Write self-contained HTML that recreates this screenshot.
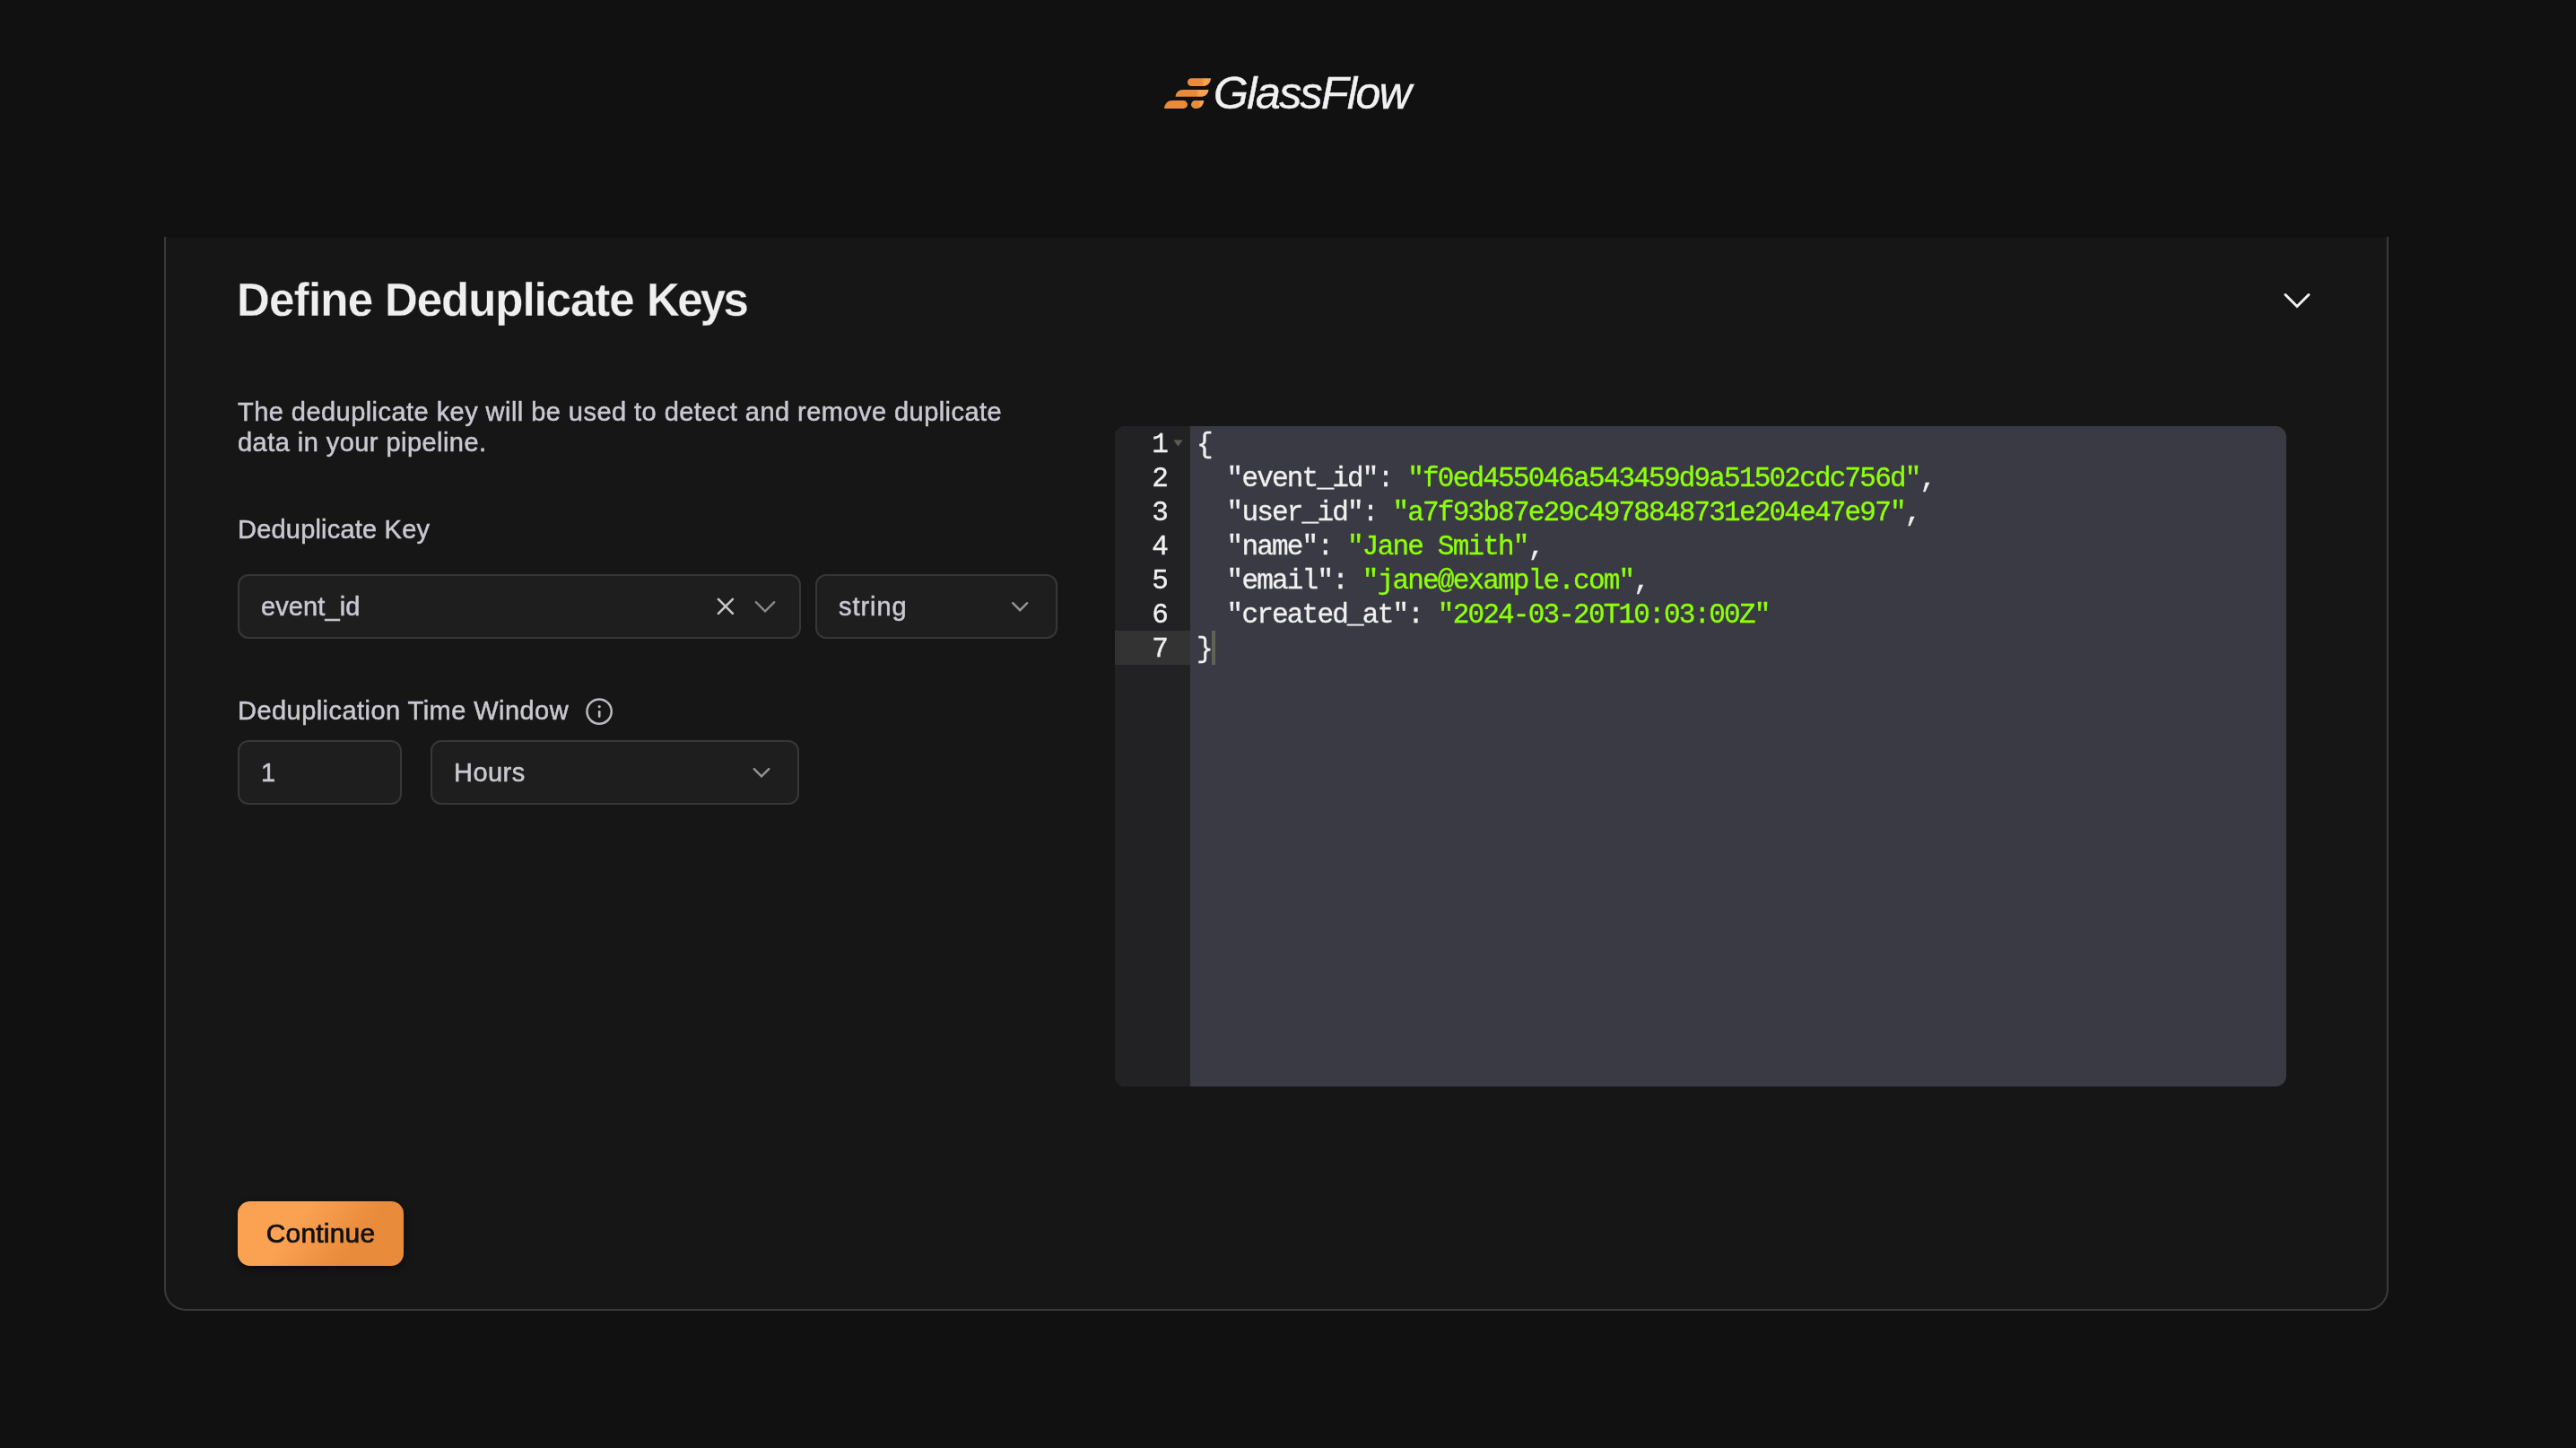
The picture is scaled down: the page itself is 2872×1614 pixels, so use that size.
<!DOCTYPE html>
<html lang="en">
<head>
<meta charset="utf-8">
<title>GlassFlow - Define Deduplicate Keys</title>
<style>
  * { box-sizing: border-box; margin: 0; padding: 0; }
  html, body {
    width: 2872px; height: 1614px; overflow: hidden;
    background: #111111;
    font-family: "Liberation Sans", sans-serif;
    color: #c9c9d1;
  }
  .abs { position: absolute; }
  .ln, .cl, .nowrap, #desc { will-change: transform; }
  .nowrap { white-space: nowrap; }

  /* ---------- logo ---------- */
  #logo-icon { left: 1290px; top: 78px; width: 80px; height: 52px; }
  #logo-text {
    left: 1353px; top: 76px;
    font-style: italic; font-size: 50px; line-height: 56px;
    color: #f1f1f3; letter-spacing: -1.55px;
    -webkit-text-stroke: 0.5px #f1f1f3;
  }

  /* ---------- card ---------- */
  #card {
    left: 183px; top: 264px; width: 2480px; height: 1197px;
    background: #161616;
    border: 2px solid #3a3a3a; border-top: none;
    border-radius: 0 0 24px 24px;
  }
  #title {
    left: 264px; top: 307px;
    font-size: 51px; line-height: 56px; font-weight: 700;
    color: #efeff0; letter-spacing: -1.15px;
    -webkit-text-stroke: 0.3px #161616;
  }
  #title span { position: absolute; top: 0; }
  #collapse { left: 2543px; top: 321px; width: 36px; height: 28px; }

  #desc {
    left: 265px; top: 442px; width: 900px;
    font-size: 29px; line-height: 34px; color: #c9c9d1; letter-spacing: 0.45px;
    -webkit-text-stroke: 0.5px #c9c9d1;
  }
  .label { font-size: 29px; line-height: 34px; color: #c9c9d1; letter-spacing: 0.45px; -webkit-text-stroke: 0.5px #c9c9d1; }
  #lbl1 { left: 265px; top: 573px; letter-spacing: 0.2px; }
  #lbl2 { left: 265px; top: 775px; }
  #info { left: 651px; top: 776px; width: 34px; height: 34px; }

  .field {
    background: #1e1e1e;
    border: 2px solid #373737;
    border-radius: 12px;
    height: 72px;
    font-size: 29px; line-height: 68px; letter-spacing: 0.45px;
    -webkit-text-stroke: 0.5px #c9c9d1;
    color: #c9c9d1;
    padding-left: 24px;
  }
  #sel1 { left: 265px; top: 640px; width: 628px; letter-spacing: 0.1px; }
  #sel2 { left: 909px; top: 640px; width: 270px; letter-spacing: 0.95px; }
  #inp  { left: 265px; top: 825px; width: 183px; }
  #sel3 { left: 480px; top: 825px; width: 411px; }
  .ico { position: absolute; }

  /* ---------- editor ---------- */
  #editor {
    left: 1243px; top: 475px; width: 1306px; height: 736px;
    background: #3a3a44;
    border-radius: 12px;
    overflow: hidden;
    font-family: "Liberation Mono", monospace;
    font-size: 31px; line-height: 38px; letter-spacing: -1.8px;
    -webkit-text-stroke: 0.35px currentColor;
  }
  #gutter {
    left: 0; top: 0; width: 84px; height: 100%;
    background: #222225;
  }
  #gutter-active { left: 0; top: 228px; width: 84px; height: 38px; background: #333333; }
  .ln {
    position: absolute; left: 0; width: 58px; text-align: right;
    color: #f0f0f0; height: 38px; margin-top: 1.5px;
  }
  .cl { position: absolute; left: 91px; white-space: pre; color: #f0f0f0; height: 38px; margin-top: 1.5px; }
  .s { color: #8dff0a; }
  #cursor { left: 108px; top: 228px; width: 4px; height: 38px; background: #5f6354; }
  #fold { left: 65px; top: 15px; width: 11px; height: 8px; }

  /* ---------- button ---------- */
  #btn {
    left: 265px; top: 1339px; width: 185px; height: 72px;
    border-radius: 14px;
    background: linear-gradient(127deg, #faa152 0%, #faa152 35%, #e88b3a 70%, #e88b3a 100%);
    box-shadow: 0 4px 10px rgba(0,0,0,0.45);
    color: #111111; font-size: 30px; line-height: 72px; text-align: center;
    font-weight: 400; -webkit-text-stroke: 0.7px #111111; letter-spacing: 0.2px;
  }
</style>
</head>
<body>

<!-- logo -->
<svg id="logo-icon" class="abs" viewBox="0 0 80 52">
  <defs>
    <linearGradient id="lg" x1="0" y1="0" x2="1" y2="0">
      <stop offset="0" stop-color="#e98b3b"/>
      <stop offset="0.62" stop-color="#e98b3b"/>
      <stop offset="0.72" stop-color="#f9a24f"/>
      <stop offset="1" stop-color="#f9a24f"/>
    </linearGradient>
  </defs>
  <g fill="url(#lg)">
    <path d="M38.3 9.2 L60 9.2 C59.6 14.6 56 18 50.5 18 L38.3 18 A4.4 4.4 0 0 1 38.3 9.2 Z"/>
    <path d="M29 21.9 L57.5 21.9 C57 26.8 53.5 29.8 48.5 29.8 L20.5 29.8 C21 25 24 21.9 29 21.9 Z"/>
    <path fill="#e98b3b" d="M17 34.1 L29.6 34.1 A4.4 4.4 0 0 1 29.6 42.9 L8 42.9 C8.5 37.5 12 34.1 17 34.1 Z"/>
    <path d="M42.4 34.1 L52.2 34.1 C51.8 39.4 48.6 42.9 43.8 42.9 L42.4 42.9 A4.4 4.4 0 0 1 42.4 34.1 Z"/>
  </g>
</svg>
<div id="logo-text" class="abs nowrap">GlassFlow</div>

<!-- card -->
<div id="card" class="abs"></div>

<div id="title" class="abs nowrap"><span style="left:0px;letter-spacing:-0.75px">Define</span><span style="left:165px;letter-spacing:-1.05px">Deduplicate</span><span style="left:457px;letter-spacing:-2.7px">Keys</span></div>
<svg id="collapse" class="abs" viewBox="0 0 36 28">
  <path d="M5 7.5 L18 20.5 L31 7.5" fill="none" stroke="#f2f2f2" stroke-width="3" stroke-linecap="round" stroke-linejoin="miter"/>
</svg>

<div id="desc" class="abs">The deduplicate key will be used to detect and remove duplicate<br>data in your pipeline.</div>

<div id="lbl1" class="abs label nowrap">Deduplicate Key</div>

<div id="sel1" class="abs field nowrap">event_id
  <svg class="ico" style="left:530px;top:23px;width:26px;height:26px" viewBox="0 0 26 26">
    <path d="M3.9 2.8 L19.9 18.8 M19.9 2.8 L3.9 18.8" fill="none" stroke="#c6c6c8" stroke-width="2.6" stroke-linecap="round"/>
  </svg>
  <svg class="ico" style="left:572px;top:24px;width:32px;height:24px" viewBox="0 0 32 24">
    <path d="M3.8 5.1 L14.05 15.4 L24.3 5.1" fill="none" stroke="#8c8c8e" stroke-width="2.2" stroke-linecap="round" stroke-linejoin="miter"/>
  </svg>
</div>
<div id="sel2" class="abs field nowrap">string
  <svg class="ico" style="left:214px;top:24px;width:28px;height:24px" viewBox="0 0 28 24">
    <path d="M4.2 6.2 L12.2 14.2 L20.2 6.2" fill="none" stroke="#949496" stroke-width="2.4" stroke-linecap="round" stroke-linejoin="miter"/>
  </svg>
</div>

<div id="lbl2" class="abs label nowrap">Deduplication Time Window</div>
<svg id="info" class="abs" viewBox="0 0 34 34">
  <circle cx="17.1" cy="17.1" r="13.65" fill="none" stroke="#b9b9bf" stroke-width="2.5"/>
  <circle cx="17.2" cy="11.6" r="1.6" fill="#b9b9bf"/>
  <path d="M17.2 17.3 L17.2 22.6" stroke="#b9b9bf" stroke-width="2.7" stroke-linecap="round"/>
</svg>

<div id="inp" class="abs field nowrap">1</div>
<div id="sel3" class="abs field nowrap">Hours
  <svg class="ico" style="left:354px;top:24px;width:28px;height:24px" viewBox="0 0 28 24">
    <path d="M4.8 6.1 L13 14.3 L21.2 6.1" fill="none" stroke="#949496" stroke-width="2.4" stroke-linecap="round" stroke-linejoin="miter"/>
  </svg>
</div>

<!-- editor -->
<div id="editor" class="abs">
  <div id="gutter" class="abs"></div>
  <div id="gutter-active" class="abs"></div>
  <div class="ln" style="top:0px">1</div>
  <div class="ln" style="top:38px">2</div>
  <div class="ln" style="top:76px">3</div>
  <div class="ln" style="top:114px">4</div>
  <div class="ln" style="top:152px">5</div>
  <div class="ln" style="top:190px">6</div>
  <div class="ln" style="top:228px">7</div>
  <svg id="fold" class="abs" viewBox="0 0 11 8"><path d="M0.3 0.6 L10.7 0.6 L5.5 7.6 Z" fill="#5a5e50"/></svg>
  <div class="cl" style="top:0px">{</div>
  <div class="cl" style="top:38px">  "event_id": <span class="s">"f0ed455046a543459d9a51502cdc756d"</span>,</div>
  <div class="cl" style="top:76px">  "user_id": <span class="s">"a7f93b87e29c4978848731e204e47e97"</span>,</div>
  <div class="cl" style="top:114px">  "name": <span class="s">"Jane Smith"</span>,</div>
  <div class="cl" style="top:152px">  "email": <span class="s">"jane@example.com"</span>,</div>
  <div class="cl" style="top:190px">  "created_at": <span class="s">"2024-03-20T10:03:00Z"</span></div>
  <div class="cl" style="top:228px">}</div>
  <div id="cursor" class="abs"></div>
</div>

<!-- button -->
<div id="btn" class="abs nowrap">Continue</div>

<script>
(function(){
  var w = window.innerWidth;
  if (w && Math.abs(w - 2872) > 1) { document.documentElement.style.zoom = (w / 2872); }
})();
</script>
</body>
</html>
